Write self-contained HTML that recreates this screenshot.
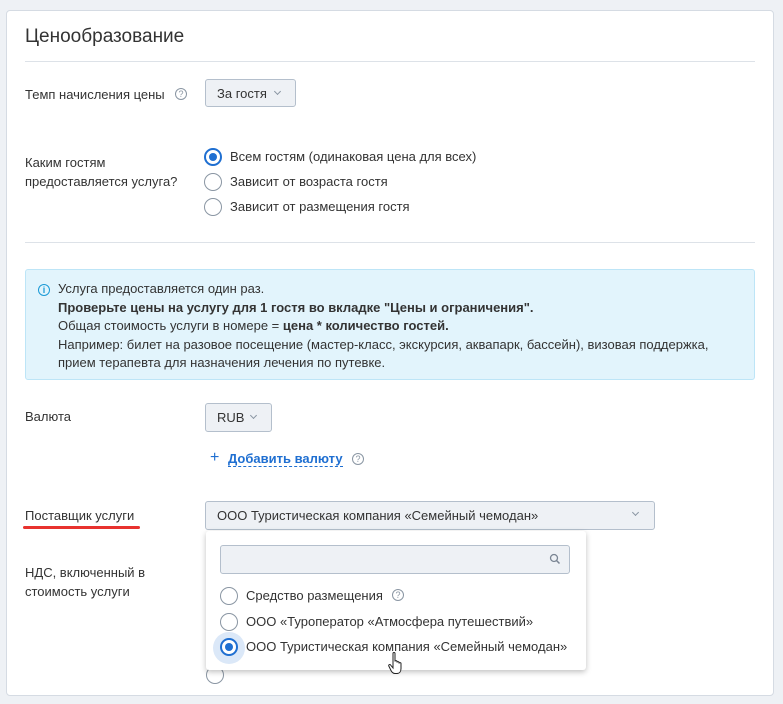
<!DOCTYPE html>
<html><head><meta charset="utf-8"><style>
*{box-sizing:border-box;margin:0;padding:0}
body{width:783px;height:704px;background:#eef1f5;font-family:"Liberation Sans",sans-serif;font-size:13px;color:#333;position:relative;overflow:hidden}
.card{position:absolute;left:6px;top:10px;width:768px;height:686px;background:#fff;border:1px solid #d5dbe3;border-radius:4px}
.a{position:absolute;white-space:nowrap}
.hr{position:absolute;left:25px;width:730px;height:1px;background:#dde2e8}
.btn{position:absolute;background:#eef1f5;border:1px solid #b4bfcc;border-radius:3px;color:#333}
.chev{display:inline-block;width:5px;height:5px;border-right:1px solid #8a96a3;border-bottom:1px solid #8a96a3;transform:rotate(45deg);position:absolute}
.q{position:absolute;width:12px;height:12px;border:1px solid #8a96a3;border-radius:50%;font-size:9px;line-height:10px;text-align:center;color:#8a96a3}
.r{position:absolute;width:18px;height:18px;border:1px solid #8a96a3;border-radius:50%;background:#fff}
.r.on{border:2px solid #1f6fd1}
.r.on::after{content:"";position:absolute;left:3px;top:3px;width:8px;height:8px;border-radius:50%;background:#1f6fd1}
</style></head><body>
<div class="card"></div>
<div class="a" style="left:25px;top:26px;font-size:19px;color:#333">Ценообразование</div>
<div class="hr" style="top:61px"></div>
<div class="a" style="left:25px;top:87px">Темп начисления цены</div>
<div class="q" style="left:175px;top:88px">?</div>
<div class="btn" style="left:205px;top:79px;width:91px;height:28px"><span class="a" style="left:11px;top:6px">За гостя</span><span class="chev" style="left:69px;top:9px"></span></div>
<div class="a" style="left:25px;top:153px;line-height:19px">Каким гостям<br>предоставляется услуга?</div>
<div class="r on" style="left:204px;top:148px"></div><div class="a" style="left:230px;top:149px">Всем гостям (одинаковая цена для всех)</div>
<div class="r" style="left:204px;top:173px"></div><div class="a" style="left:230px;top:174px">Зависит от возраста гостя</div>
<div class="r" style="left:204px;top:198px"></div><div class="a" style="left:230px;top:199px">Зависит от размещения гостя</div>
<div class="hr" style="top:242px"></div>
<div style="position:absolute;left:25px;top:269px;width:730px;height:111px;background:#e2f4fc;border:1px solid #bde5f7;border-radius:3px"></div>
<div class="q" style="left:38px;top:284px;border-color:#1a9ad6;color:#1a9ad6;font-weight:bold">i</div>
<div class="a" style="left:58px;top:280px;line-height:18.5px">Услуга предоставляется один раз.<br><b>Проверьте цены на услугу для 1 гостя во вкладке "Цены и ограничения".</b><br>Общая стоимость услуги в номере = <b>цена * количество гостей.</b><br>Например: билет на разовое посещение (мастер-класс, экскурсия, аквапарк, бассейн), визовая поддержка,<br>прием терапевта для назначения лечения по путевке.</div>
<div class="a" style="left:25px;top:409px">Валюта</div>
<div class="btn" style="left:205px;top:403px;width:67px;height:29px"><span class="a" style="left:11px;top:6px">RUB</span><span class="chev" style="left:45px;top:9px"></span></div>
<div class="a" style="left:210px;top:449px;color:#1f6fd1;font-size:16px">+</div>
<div class="a" style="left:228px;top:451px;color:#1f6fd1;font-weight:bold;border-bottom:1px dashed #1f6fd1">Добавить валюту</div>
<div class="q" style="left:352px;top:453px">?</div>
<div class="a" style="left:25px;top:508px">Поставщик услуги</div>
<div style="position:absolute;left:23px;top:526px;width:117px;height:3px;background:#e8322f;border-radius:2px"></div>
<div class="btn" style="left:205px;top:501px;width:450px;height:29px"><span class="a" style="left:11px;top:6px">ООО Туристическая компания «Семейный чемодан»</span><span class="chev" style="left:427px;top:8px"></span></div>
<div class="a" style="left:25px;top:563px;line-height:19px">НДС, включенный в<br>стоимость услуги</div>
<div class="r" style="left:206px;top:666px"></div>
<div style="position:absolute;left:206px;top:531px;width:380px;height:139px;background:#fff;border-radius:3px;box-shadow:0 2px 6px rgba(0,0,0,.25)"></div>
<div style="position:absolute;left:220px;top:545px;width:350px;height:29px;background:#eef1f5;border:1px solid #b4bfcc;border-radius:3px"></div>
<svg class="a" style="left:549px;top:553px" width="12" height="12" viewBox="0 0 12 12"><circle cx="5" cy="5" r="3.5" fill="none" stroke="#7a8593" stroke-width="1.3"/><path d="M7.5 7.5L10.5 10.5" stroke="#7a8593" stroke-width="1.5"/></svg>
<div class="r" style="left:220px;top:587px"></div><div class="a" style="left:246px;top:588px">Средство размещения</div>
<div class="q" style="left:392px;top:589px">?</div>
<div class="r" style="left:220px;top:613px"></div><div class="a" style="left:246px;top:614px">ООО «Туроператор «Атмосфера путешествий»</div>
<div style="position:absolute;left:213px;top:632px;width:32px;height:32px;border-radius:50%;background:#dbe8f8"></div>
<div class="r on" style="left:220px;top:638px"></div><div class="a" style="left:246px;top:639px">ООО Туристическая компания «Семейный чемодан»</div>
<svg class="a" style="left:388px;top:651px" width="18" height="26" viewBox="0 0 18 26"><path d="M5 2.5c0-1.4 2-1.4 2 0v8c0-1.2 2-1.2 2 0v1c0-1.2 2-1.2 2 0v1c0-1.2 2-1.2 2 0v5c0 3-1.5 5-4 5H7c-2 0-3-1-4-3l-2.2-4.5c-.5-1.2 1-2 1.8-1l2.4 3z" fill="#fff" stroke="#222" stroke-width="1"/></svg>
</body></html>
